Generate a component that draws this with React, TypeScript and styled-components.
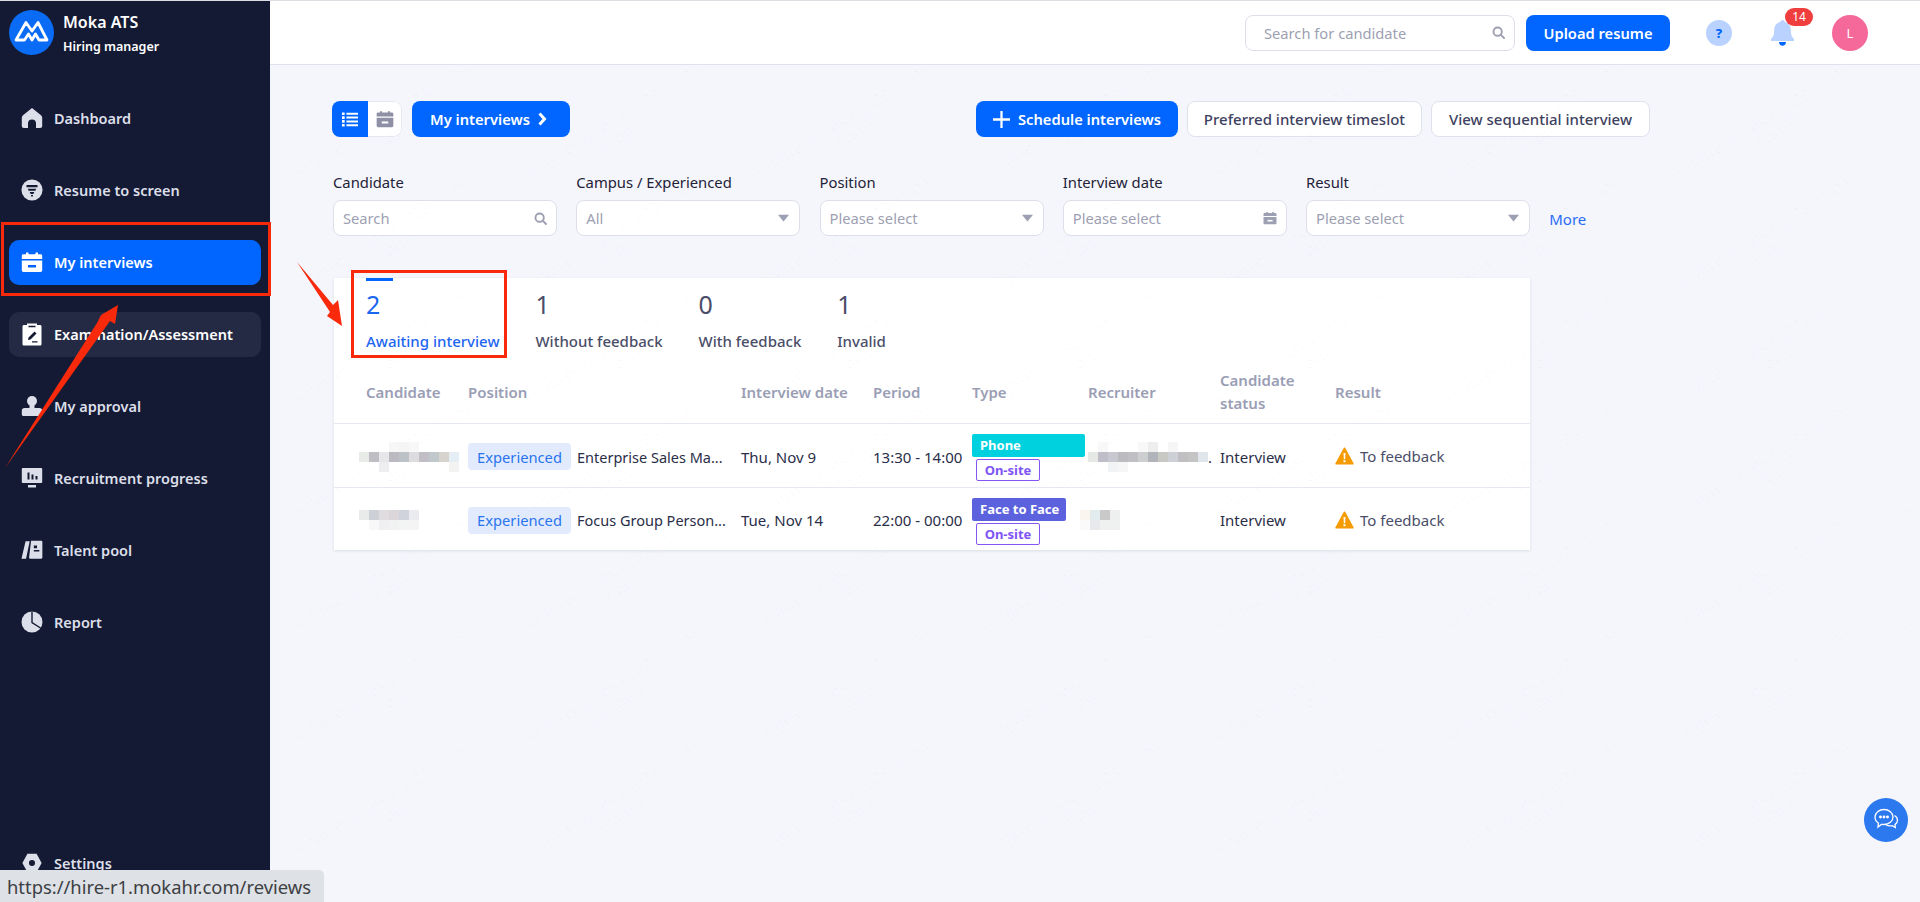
import React from "react";
import styled, { createGlobalStyle } from "styled-components";

const Global = createGlobalStyle`
  html, body { margin: 0; padding: 0; height: 100%; background: #f4f6fb; }
  body { font-family: "Noto Sans", "Liberation Sans", sans-serif; font-size: 15px; color: #1f2238; overflow: hidden; }
  * { box-sizing: border-box; }
`;

const Shell = styled.div`
  position: relative; display: flex; width: 1920px; height: 902px; overflow: hidden;
  border-top: 1px solid #dcdee3; background: #f4f6fb;
`;
const Sidebar = styled.aside`
  width: 270px; flex: none; height: 100%; background: #141a33; display: flex; flex-direction: column; padding: 9px 9px 16px;
`;
const Brand = styled.div`display: flex; gap: 9px; align-items: flex-start; height: 45px;`;
const BrandText = styled.div`
  display: flex; flex-direction: column; color: #fff; font-weight: 600; padding-top: 1px;
  strong { font-size: 16px; line-height: 22px; font-weight: 600; }
  span { font-size: 12.500px; line-height: 18px; margin-top: 5px; }
`;
const Nav = styled.nav`display: flex; flex-direction: column; gap: 27px; margin-top: 41px; flex: 1;`;
const NavItem = styled.div<{ $state?: "active" | "hover"; $bottom?: boolean }>`
  height: 45px; flex: none; display: flex; align-items: center; gap: 11px; padding: 0 0 2px 12px; border-radius: 10px;
  font-size: 14.500px; font-weight: 600; white-space: nowrap;
  color: ${p => (p.$state ? "#fff" : "#dcdfe9")};
  background: ${p => (p.$state === "active" ? "#0066ff" : p.$state === "hover" ? "#252a44" : "transparent")};
  margin-top: ${p => (p.$bottom ? "auto" : "0")};
  svg { flex: none; }
`;
const Main = styled.main`flex: 1; min-width: 0; display: flex; flex-direction: column; position: relative;`;
const Header = styled.header`
  height: 64px; flex: none; background: #fff; border-bottom: 1px solid #dfe1ec; display: flex; align-items: center; padding-left: 975px;
`;
const InputBox = styled.div<{ $w?: number }>`
  width: ${p => p.$w ?? 224}px; height: 36px; flex: none; background: #fff; border: 1px solid #dedfea; border-radius: 8px;
  display: flex; align-items: center; justify-content: space-between; color: #9d9fb2; font-size: 14.700px;
  padding: 0 9px 0 ${p => (p.$w ? 18 : 9)}px;
`;
const PrimaryButton = styled.button<{ $w: number; $gap?: number; $left?: number }>`
  width: ${p => p.$w}px; height: 36px; flex: none; border: 0; border-radius: 8px; background: #0066ff; color: #fff;
  font: 600 14.700px "Noto Sans", sans-serif; display: flex; align-items: center; gap: ${p => p.$gap ?? 0}px;
  justify-content: ${p => (p.$left ? "flex-start" : "center")}; padding: 0 0 0 ${p => p.$left ?? 0}px;
`;
const UploadButton = styled(PrimaryButton)`margin-left: 11px;`;
const HelpDot = styled.div`
  width: 26px; height: 26px; margin-left: 36px; border-radius: 50%; background: #b9d2ff; color: #0066ff;
  font-weight: 800; font-size: 13px; display: flex; align-items: center; justify-content: center;
`;
const Bell = styled.div`position: relative; width: 25px; height: 26px; margin-left: 38px; display: flex;`;
const Badge = styled.div`
  position: absolute; left: 15px; top: -12px; width: 28px; height: 18px; border-radius: 9px; background: #f03d3d; color: #fff;
  font-size: 12px; line-height: 18px; text-align: center;
`;
const Avatar = styled.div`
  width: 36px; height: 36px; margin-left: 37px; border-radius: 50%; background: #f4689a; color: #fff; font-size: 13px;
  display: flex; align-items: center; justify-content: center;
`;
const Content = styled.div`padding: 36px 0 0 62px; display: flex; flex-direction: column;`;
const Toolbar = styled.div`display: flex; align-items: center; width: 1318px; height: 36px;`;
const Toggle = styled.div`
  display: flex; width: 70px; height: 36px; border-radius: 8px; overflow: hidden; background: #fff; margin-right: 10px;
`;
const ToggleCell = styled.div<{ $on?: boolean }>`
  flex: ${p => (p.$on ? "0 0 36px" : "1")}; display: flex; align-items: center; justify-content: center;
  background: ${p => (p.$on ? "#0066ff" : "#fff")};
  border: ${p => (p.$on ? "0" : "1px solid #e6e8f1")}; border-left: 0; border-radius: ${p => (p.$on ? "0" : "0 8px 8px 0")};
`;
const RightTools = styled.div`margin-left: auto; display: flex; gap: 9px;`;
const GhostButton = styled.button<{ $w: number }>`
  width: ${p => p.$w}px; height: 36px; border: 1px solid #dfe1ec; border-radius: 8px; background: #fff; color: #3e4260;
  font: 500 15px "Noto Sans", sans-serif; padding: 0;
`;
const Filters = styled.div`display: flex; gap: 19.250px; margin: 35px 0 0 1px; align-items: flex-end;`;
const Field = styled.label`
  display: flex; flex-direction: column; gap: 7px; font-size: 14.800px; line-height: 21px; color: #1f2238;
`;
const MoreLink = styled.a`color: #2a6cf6; font-size: 15px; line-height: 20px; margin-bottom: 7px;`;
const Card = styled.section`
  width: 1196px; margin: 42px 0 0 2px; background: #fff; box-shadow: 0 1px 3px rgba(40, 50, 90, 0.12); position: relative;
`;
const Tabs = styled.div`display: flex; gap: 36px; padding: 0 0 0 32px; height: 79px;`;
const Tab = styled.div<{ $on?: boolean }>`
  position: relative; display: flex; flex-direction: column; color: ${p => (p.$on ? "#1d66f2" : "#4a4e68")};
  &::before { content: ""; position: absolute; top: 0; left: 0; width: 27px; height: 3px; background: ${p => (p.$on ? "#0066ff" : "transparent")}; }
`;
const TabNum = styled.div`font-size: 25px; line-height: 32px; margin-top: 10px; color: inherit;`;
const TabLabel = styled.div`font-size: 15px; line-height: 20px; margin-top: 11px; white-space: nowrap; font-weight: 500;`;
const Row = styled.div`
  display: grid; grid-template-columns: 102px 273px 132px 99px 116px 132px 115px 1fr; padding-left: 32px; align-items: center;
`;
const HeadRow = styled(Row)`height: 67px; padding-top: 4px; border-bottom: 1px solid #e6e8f1;`;
const BodyRow = styled(Row)`
  height: 63px; padding-top: 2px;
  & + & { border-top: 1px solid #e6e8f1; }
`;
const HeadCell = styled.div`font-size: 15px; line-height: 23px; font-weight: 600; color: #9a9eb5;`;
const Cell = styled.div`font-size: 15px; color: #2a2e48; white-space: nowrap; display: flex; align-items: center; min-width: 0;`;
const ExpTag = styled.span`
  width: 103px; height: 27px; flex: none; border-radius: 4px; background: #e1ebfd; color: #2a74ee; font-size: 14.700px;
  display: flex; align-items: center; justify-content: center; margin-right: 6px;
`;
const PosName = styled.span`font-size: 14.500px;`;
const TypeCol = styled.div`display: flex; flex-direction: column; align-items: flex-start; gap: 2px; margin-top: 2px;`;
const TypeTag = styled.span<{ $bg: string; $w: number }>`
  width: ${p => p.$w}px; height: 23px; padding-left: 8px; border-radius: 2px; background: ${p => p.$bg}; color: #fff;
  font-size: 13px; font-weight: 700; line-height: 22px;
`;
const ModeTag = styled.span`
  width: 64px; height: 22px; margin-left: 4px; border: 1px solid #8457f5; border-radius: 2px; color: #7e54f4; background: #fff;
  font-size: 13px; font-weight: 700; line-height: 20px; text-align: center;
`;
const ResultText = styled.span`color: #4a4e68; display: flex; align-items: center; gap: 6px; margin-top: -1px;`;
const Mosaic = styled.svg<{ $shift?: number }>`flex: none; display: block; margin-left: ${p => p.$shift ?? 0}px;`;
const ChatFab = styled.div`
  position: absolute; left: 1864px; top: 797px; width: 44px; height: 44px; border-radius: 50%; background: #2b78ef;
  display: flex; align-items: center; justify-content: center;
`;
const StatusBubble = styled.div`
  position: absolute; left: 0; bottom: 0; width: 324px; height: 32px; background: #dee1e6; border-top-right-radius: 5px; color: #3c4043;
  font: 18.400px/34px "Noto Sans", sans-serif; padding-left: 7px; white-space: nowrap; z-index: 6;
`;
const MarkLayer = styled.div`
  position: absolute; left: 0; right: 0; top: 64px; bottom: 0; overflow: hidden; pointer-events: none;
  display: grid; grid-template-columns: repeat(8, 230px); grid-auto-rows: 113px;
`;
const MarkCell = styled.div`position: relative;`;
const MarkText = styled.div`
  position: absolute; left: 23px; top: -10px; width: max-content; text-align: center; transform-origin: 0 17px; transform: rotate(-31deg);
  font-size: 16px; line-height: 17px; color: rgba(30, 40, 80, 0.028);
`;
const RedBox = styled.div<{ $x: number; $y: number; $w: number; $h: number }>`
  position: absolute; left: ${p => p.$x}px; top: ${p => p.$y}px; width: ${p => p.$w}px; height: ${p => p.$h}px;
  border: 3px solid #f9290b; pointer-events: none; z-index: 4;
`;
const ArrowLayer = styled.svg`position: absolute; left: 0; top: 0; z-index: 5; pointer-events: none;`;

const c = "#dcdfe9";
const D = "#141a33";
const IconHome = () => <svg width="22" height="22" viewBox="0 0 22 22"><path fill={c} d="M11 1 20 8.200c.8.700 1.200 1.500 1.200 2.500V19c0 1.200-.8 2-2 2H15v-4.500a4 4 0 0 0-8 0V21H2.800c-1.200 0-2-.8-2-2v-8.300c0-1 .4-1.800 1.200-2.500z" /></svg>;
const IconFunnel = () => <svg width="22" height="24" viewBox="0 0 24 24"><circle cx="12" cy="12" r="11.500" fill={c} /><path fill={D} d="M6 6.500h12v2.500H6zM7.500 10.500h9l-.8 2.300H8.300zM9.500 14.300h5l-1 2h-3zM11 17.500h2V19h-2z" /></svg>;
const IconCal = ({ f = "#fff", h = "#0066ff", s = 22 }: { f?: string; h?: string; s?: number }) => <svg width={s} height={s} viewBox="0 0 22 22"><path fill={f} d="M5 1.500h2.500v1.700h7V1.500H17v1.700h2.500c1 0 1.700.7 1.700 1.700V8H.8V4.900c0-1 .7-1.700 1.700-1.700H5zM.8 9.500h20.400v9.800c0 1-.7 1.700-1.700 1.700h-17c-1 0-1.700-.7-1.700-1.700z" /><rect x="7" y="14" width="8" height="2.500" fill={h} /></svg>;
const IconClip = () => <svg width="22" height="24" viewBox="0 0 22 24"><path fill="#fff" d="M3 3h3V1.500h10V3h3c1 0 1.500.6 1.500 1.500v17.500c0 1-.6 1.500-1.500 1.500H3c-1 0-1.500-.5-1.500-1.500V4.500C1.500 3.600 2 3 3 3z" /><path fill={D} d="M7.500 3.800h7v1.500h-7zM13.500 9.500l2 2-6 6-2.500.5.500-2.500zM11 19.300h5.500v1.200H11z" /></svg>;
const IconUser = () => <svg width="22" height="22" viewBox="0 0 22 22"><circle cx="11" cy="6" r="5" fill={c} /><path fill={c} d="M8.500 9h5v4h5c1.700 0 2.700 1 2.700 2.700v3.500c0 1-.7 1.800-1.700 1.800H2.500c-1 0-1.700-.8-1.700-1.800v-3.500C.8 14 1.800 13 3.500 13h5z" /></svg>;
const IconMonitor = () => <svg width="22" height="22" viewBox="0 0 22 22"><path fill={c} d="M2 1h18c.8 0 1.200.5 1.200 1.200v12.600c0 .8-.4 1.200-1.200 1.200H2c-.8 0-1.200-.4-1.200-1.200V2.200C.8 1.500 1.200 1 2 1zM7 18h8v2.500H7z" /><path fill={D} d="M6.500 5.500h2v7h-2zM10.500 7.500h2v5h-2zM14.500 9h2v3.500h-2z" /></svg>;
const IconBook = () => <svg width="22" height="22" viewBox="0 0 24 22"><path fill={c} d="M5 1.500h4.500L5.500 20.500H.5zM11 1h11c.8 0 1.300.5 1.300 1.300v17c0 .8-.5 1.300-1.300 1.300H10c-.8 0-1.200-.5-1.200-1.300L11 1z" /><path fill={D} d="M14 6h3.500v3H14zM14 11h6v1.500h-6z" /></svg>;
const IconPie = () => <svg width="22" height="22" viewBox="0 0 22 22"><circle cx="11" cy="11" r="10.500" fill={c} /><path stroke={D} strokeWidth="1.400" fill="none" d="M11 .5V11.500l8.500 5.500" /></svg>;
const IconGear = () => <svg width="22" height="22" viewBox="0 0 24 24"><path fill={c} d="M7 2h10l5.500 10L17 22H7L1.500 12z" /><circle cx="12" cy="12" r="3.300" fill={D} /></svg>;
const LogoMark = () => <svg width="45" height="45" viewBox="0 0 45 45"><circle cx="22.500" cy="22.500" r="22.500" fill="#0a6cf5" /><path fill="none" stroke="#fff" strokeWidth="2.800" strokeLinejoin="round" d="M7 30 17 12.500l6 8.500 6-8.500L38 30h-8l-3.500-6L23 30l-3.500-6-4 6z" /></svg>;
const IconSearch = () => <svg width="13" height="13" viewBox="0 0 15 15" fill="none" stroke="#9d9fb2" strokeWidth="2.200"><circle cx="6.500" cy="6.500" r="4.800" /><path d="m10 10 3.800 3.800" strokeLinecap="round" /></svg>;
const Caret = () => <svg width="13" height="8" viewBox="0 0 12 8"><path fill="#9d9fb2" d="M.5.800h11L6 7.500z" /></svg>;
const IconWarn = () => <svg width="19" height="18" viewBox="0 0 19 18"><path fill="#f59a00" stroke="#f59a00" strokeWidth="1.500" strokeLinejoin="round" d="M9.500 1.200 18 16.800H1z" /><path fill="#fff" d="M8.500 6h2l-.3 6.200H8.800zM8.500 13.300h2v2h-2z" /></svg>;

type Cells = [number, number, string][];
const Pixels = ({ w, h, cells, shift }: { w: number; h: number; cells: Cells; shift?: number }) => (
  <Mosaic width={w} height={h} viewBox={`0 0 ${w} ${h}`} $shift={shift}>
    {cells.map(([x, y, f], i) => <rect key={i} x={x * 10} y={y * 10} width="10" height="10" fill={f} />)}
  </Mosaic>
);

const cand1: Cells = [[3, 0, "#f7f7f8"], [4, 0, "#f5f5f6"], [5, 0, "#f8f8f9"], [0, 1, "#e9ebe9"], [1, 1, "#bfbec4"], [2, 1, "#e7e7e9"], [3, 1, "#bcbac0"], [4, 1, "#bcc2c8"], [5, 1, "#dcdcdf"], [6, 1, "#c2bec6"], [7, 1, "#c0c8cc"], [8, 1, "#d6d4cc"], [9, 1, "#e5eef4"], [2, 2, "#eeeef0"], [9, 2, "#f3f3f1"]];
const cand2: Cells = [[0, 0, "#e9ebeb"], [1, 0, "#cdd0d6"], [2, 0, "#e0dde0"], [3, 0, "#dad6da"], [4, 0, "#d0d3dc"], [5, 0, "#eaebee"], [1, 1, "#f8f8f9"], [2, 1, "#f0f0f2"], [3, 1, "#f1f2f2"], [4, 1, "#f3f4f4"], [5, 1, "#f4f4f4"]];
const rec1: Cells = [[1, 0, "#f8f8f9"], [5, 0, "#f8f8f8"], [6, 0, "#eeeeef"], [8, 0, "#f6f6f6"], [0, 1, "#e6e8e6"], [1, 1, "#bfbec8"], [2, 1, "#c8c8d0"], [3, 1, "#bcbcc0"], [4, 1, "#c0c0c4"], [5, 1, "#cdced0"], [6, 1, "#b2b4bc"], [7, 1, "#c8c8c4"], [8, 1, "#cdd0d6"], [9, 1, "#c0c0c2"], [10, 1, "#c4c4c4"], [11, 1, "#e0e6ec"], [2, 2, "#f2f3f4"], [3, 2, "#f6f6f6"]];
const rec2: Cells = [[0, 0, "#fbf5f0"], [1, 0, "#e2ecef"], [2, 0, "#c9c9c9"], [3, 0, "#edf0ef"], [0, 1, "#fafafa"], [1, 1, "#e8e9ec"], [2, 1, "#eef1f0"], [3, 1, "#eef1f0"]];

const nav: [string, React.ReactNode, ("active" | "hover")?][] = [
  ["Dashboard", <IconHome />],
  ["Resume to screen", <IconFunnel />],
  ["My interviews", <IconCal />, "active"],
  ["Examination/Assessment", <IconClip />, "hover"],
  ["My approval", <IconUser />],
  ["Recruitment progress", <IconMonitor />],
  ["Talent pool", <IconBook />],
  ["Report", <IconPie />],
];

export default function App() {
  return (
    <>
      <Global />
      <Shell>
        <Sidebar>
          <Brand>
            <LogoMark />
            <BrandText><strong>Moka ATS</strong><span>Hiring manager</span></BrandText>
          </Brand>
          <Nav>
            {nav.map(([t, i, s]) => <NavItem key={t} $state={s}>{i}{t}</NavItem>)}
            <NavItem $bottom><IconGear />Settings</NavItem>
          </Nav>
        </Sidebar>
        <Main>
          <Header>
            <InputBox $w={270}>Search for candidate<IconSearch /></InputBox>
            <UploadButton $w={144}>Upload resume</UploadButton>
            <HelpDot>?</HelpDot>
            <Bell>
              <svg width="25" height="26" viewBox="0 0 25 26"><path fill="#b9d2ff" d="M12.500 0c1.200 0 2 .8 2 1.800 4 1 6.300 4.200 6.300 8.700 0 4 .8 6.200 3.200 8.500v2H1v-2c2.400-2.300 3.200-4.500 3.200-8.500 0-4.500 2.300-7.700 6.300-8.700 0-1 .8-1.800 2-1.800z" /><path fill="#0066ff" d="M9 22h7c0 2.200-1.500 3.800-3.500 3.800S9 24.200 9 22z" /></svg>
              <Badge>14</Badge>
            </Bell>
            <Avatar>L</Avatar>
          </Header>
          <Content>
            <Toolbar>
              <Toggle>
                <ToggleCell $on>
                  <svg width="16" height="15" viewBox="0 0 18 16" fill="#fff"><path d="M0 0h3v3H0zM5 .3h13v2.400H5zM0 4.300h3v3H0zM5 4.600h13V7H5zM0 8.700h3v3H0zM5 9h13v2.400H5zM0 13h3v3H0zM5 13.300h13v2.400H5z" /></svg>
                </ToggleCell>
                <ToggleCell><IconCal f="#8f90a6" s={18} h="#fff" /></ToggleCell>
              </Toggle>
              <PrimaryButton $w={158} $gap={8} $left={18}>
                My interviews
                <svg width="9" height="14" viewBox="0 0 9 14" fill="none" stroke="#fff" strokeWidth="3"><path d="m1.500 1.500 5 5.500-5 5.500" /></svg>
              </PrimaryButton>
              <RightTools>
                <PrimaryButton $w={202} $gap={8}>
                  <svg width="17" height="17" viewBox="0 0 18 18" stroke="#fff" strokeWidth="2.400"><path d="M9 0v18M0 9h18" /></svg>
                  Schedule interviews
                </PrimaryButton>
                <GhostButton $w={235}>Preferred interview timeslot</GhostButton>
                <GhostButton $w={219}>View sequential interview</GhostButton>
              </RightTools>
            </Toolbar>
            <Filters>
              <Field>Candidate<InputBox>Search<IconSearch /></InputBox></Field>
              <Field>Campus / Experienced<InputBox>All<Caret /></InputBox></Field>
              <Field>Position<InputBox>Please select<Caret /></InputBox></Field>
              <Field>Interview date<InputBox>Please select<IconCal f="#9d9fb2" h="#fff" s={14} /></InputBox></Field>
              <Field>Result<InputBox>Please select<Caret /></InputBox></Field>
              <MoreLink>More</MoreLink>
            </Filters>
            <Card>
              <Tabs>
                <Tab $on><TabNum>2</TabNum><TabLabel>Awaiting interview</TabLabel></Tab>
                <Tab><TabNum>1</TabNum><TabLabel>Without feedback</TabLabel></Tab>
                <Tab><TabNum>0</TabNum><TabLabel>With feedback</TabLabel></Tab>
                <Tab><TabNum>1</TabNum><TabLabel>Invalid</TabLabel></Tab>
              </Tabs>
              <HeadRow>
                <HeadCell>Candidate</HeadCell>
                <HeadCell>Position</HeadCell>
                <HeadCell>Interview date</HeadCell>
                <HeadCell>Period</HeadCell>
                <HeadCell>Type</HeadCell>
                <HeadCell>Recruiter</HeadCell>
                <HeadCell>Candidate<br />status</HeadCell>
                <HeadCell>Result</HeadCell>
              </HeadRow>
              <div>
                <BodyRow>
                  <Cell><Pixels w={100} h={30} cells={cand1} shift={-7} /></Cell>
                  <Cell><ExpTag>Experienced</ExpTag><PosName>Enterprise Sales Ma...</PosName></Cell>
                  <Cell>Thu, Nov 9</Cell>
                  <Cell>13:30 - 14:00</Cell>
                  <Cell><TypeCol><TypeTag $bg="#00d1de" $w={113}>Phone</TypeTag><ModeTag>On-site</ModeTag></TypeCol></Cell>
                  <Cell><Pixels w={120} h={30} cells={rec1} />.</Cell>
                  <Cell>Interview</Cell>
                  <Cell><ResultText><IconWarn />To feedback</ResultText></Cell>
                </BodyRow>
                <BodyRow>
                  <Cell><Pixels w={60} h={20} cells={cand2} shift={-7} /></Cell>
                  <Cell><ExpTag>Experienced</ExpTag><PosName>Focus Group Person...</PosName></Cell>
                  <Cell>Tue, Nov 14</Cell>
                  <Cell>22:00 - 00:00</Cell>
                  <Cell><TypeCol><TypeTag $bg="#5c62de" $w={94}>Face to Face</TypeTag><ModeTag>On-site</ModeTag></TypeCol></Cell>
                  <Cell><Pixels w={40} h={20} cells={rec2} shift={-8} /></Cell>
                  <Cell>Interview</Cell>
                  <Cell><ResultText><IconWarn />To feedback</ResultText></Cell>
                </BodyRow>
              </div>
            </Card>
          </Content>
          <MarkLayer>
            {Array.from({ length: 64 }).map((_, i) => (
              <MarkCell key={i}><MarkText>lixingwei@moka 2023-11-09<br />lixingwei</MarkText></MarkCell>
            ))}
          </MarkLayer>
        </Main>
        <ChatFab>
          <svg width="30" height="30" viewBox="0 0 30 30" fill="none" stroke="#fff" strokeWidth="1.300"><path d="M13 4.500c5 0 9 3.300 9 7.500s-4 7.500-9 7.500c-.8 0-1.500-.1-2.300-.2L7 22l.4-4C5.300 16.700 4 14.500 4 12c0-4.200 4-7.500 9-7.500z" /><path d="M23.500 10.500c2 1.200 3 2.800 3 4.700 0 1.800-1 3.400-2.500 4.400l.3 3-3-1.800c-2.500.4-5-.1-6.800-1.300" /><circle cx="9.500" cy="12" r=".8" fill="#fff" /><circle cx="13" cy="12" r=".8" fill="#fff" /><circle cx="16.500" cy="12" r=".8" fill="#fff" /></svg>
        </ChatFab>
        <RedBox $x={1} $y={221} $w={270} $h={74} />
        <RedBox $x={351} $y={269} $w={156} $h={88} />
        <ArrowLayer width="1920" height="901" viewBox="0 0 1920 901">
          <path fill="#f9290b" d="M5 467 97 322l4-8 17-10-3 19-5-3z" />
          <path fill="#f9290b" d="M297 261 333 304l5-5 4 26-15-10 3-4z" />
        </ArrowLayer>
        <StatusBubble>https://hire-r1.mokahr.com/reviews</StatusBubble>
      </Shell>
    </>
  );
}
